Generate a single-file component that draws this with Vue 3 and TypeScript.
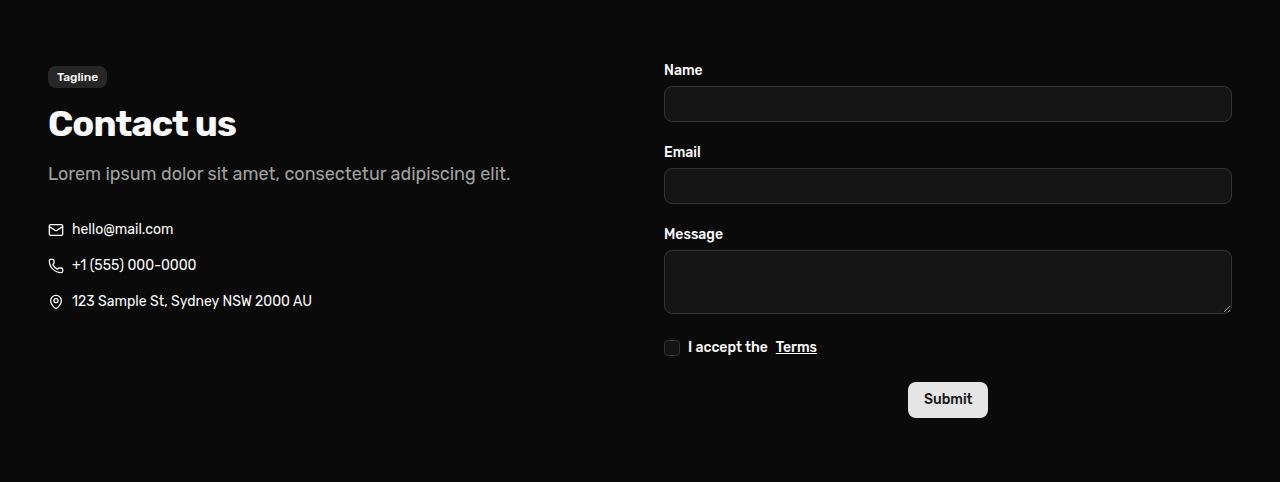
<script setup lang="ts">
import { ref } from 'vue'

const name = ref('')
const email = ref('')
const message = ref('')
const accepted = ref(false)
</script>

<template>
  <section class="contact">
    <div class="intro">
      <span class="badge">Tagline</span>
      <h1>Contact us</h1>
      <p class="lead">Lorem ipsum dolor sit amet, consectetur adipiscing elit.</p>
      <ul class="details">
        <li>
          <svg viewBox="0 0 24 24"><rect width="20" height="16" x="2" y="4" rx="2" /><path d="m22 7-8.991 5.727a2 2 0 0 1-2.009 0L2 7" /></svg>
          <span>hello@mail.com</span>
        </li>
        <li>
          <svg viewBox="0 0 24 24"><path d="M13.832 16.568a1 1 0 0 0 1.213-.303l.355-.465A2 2 0 0 1 17 15h3a2 2 0 0 1 2 2v3a2 2 0 0 1-2 2A18 18 0 0 1 2 4a2 2 0 0 1 2-2h3a2 2 0 0 1 2 2v3a2 2 0 0 1-.8 1.6l-.468.351a1 1 0 0 0-.292 1.233 14 14 0 0 0 6.392 6.384" /></svg>
          <span>+1 (555) 000-0000</span>
        </li>
        <li>
          <svg viewBox="0 0 24 24"><path d="M20 10c0 4.993-5.539 10.193-7.399 11.799a1 1 0 0 1-1.202 0C9.539 20.193 4 14.993 4 10a8 8 0 0 1 16 0" /><circle cx="12" cy="10" r="3" /></svg>
          <span>123 Sample St, Sydney NSW 2000 AU</span>
        </li>
      </ul>
    </div>
    <form class="form" @submit.prevent>
      <div class="field">
        <label for="name">Name</label>
        <input id="name" v-model="name" type="text" />
      </div>
      <div class="field">
        <label for="email">Email</label>
        <input id="email" v-model="email" type="email" />
      </div>
      <div class="field">
        <label for="message">Message</label>
        <textarea id="message" v-model="message"></textarea>
      </div>
      <div class="terms">
        <input id="terms" v-model="accepted" type="checkbox" />
        <label for="terms"><span>I accept the</span><a href="#">Terms</a></label>
      </div>
      <button type="submit">Submit</button>
    </form>
  </section>
</template>

<style>
body {
  margin: 0;
  background: #0a0a0a;
}
</style>

<style scoped>
* {
  box-sizing: border-box;
}
.contact {
  min-height: 482px;
  padding: 64px 48px;
  display: grid;
  grid-template-columns: 1fr 1fr;
  gap: 48px;
  background: #0a0a0a;
  color: #fafafa;
  font: 500 14px/20px Rubik, Roboto, sans-serif;
}
.intro {
  display: flex;
  flex-direction: column;
  align-items: flex-start;
  padding-top: 2px;
}
.badge {
  width: 59px;
  height: 22px;
  padding: 0 9px;
  border-radius: 8px;
  background: #262626;
  font-size: 12px;
  line-height: 22px;
  white-space: nowrap;
}
h1 {
  margin: 16px 0;
  font-size: 36px;
  line-height: 40px;
  font-weight: 700;
  letter-spacing: -0.025em;
}
.lead {
  margin: 0 0 32px;
  color: #a1a1a1;
  font-size: 18px;
  line-height: 28px;
  font-weight: 400;
}
.details {
  margin: 0;
  padding: 0;
  list-style: none;
  display: grid;
  gap: 16px;
  font-weight: 400;
}
.details li {
  display: flex;
  align-items: center;
  gap: 8px;
}
svg {
  width: 16px;
  height: 16px;
  fill: none;
  stroke: currentColor;
  stroke-width: 2;
  stroke-linecap: round;
  stroke-linejoin: round;
}
.form {
  display: flex;
  flex-direction: column;
  gap: 24px;
}
.field {
  display: grid;
  gap: 8px;
}
label {
  line-height: 14px;
}
input,
textarea {
  width: 100%;
  height: 36px;
  margin: 0;
  padding: 8px 12px;
  border: 1px solid #343434;
  border-radius: 8px;
  outline: none;
  background: #151515;
  color: inherit;
  font: inherit;
}
textarea {
  display: block;
  height: 64px;
  resize: vertical;
}
.terms {
  display: flex;
  align-items: center;
  gap: 8px;
  margin: 2px 0;
}
.terms input {
  appearance: none;
  width: 16px;
  height: 16px;
  padding: 0;
  border-radius: 4px;
}
.terms label {
  display: flex;
  gap: 8px;
}
a {
  color: inherit;
  text-decoration: underline;
}
button {
  align-self: center;
  width: 80px;
  height: 36px;
  padding: 0 16px;
  border: 0;
  border-radius: 8px;
  background: #e5e5e5;
  color: #171717;
  font: inherit;
}
</style>
